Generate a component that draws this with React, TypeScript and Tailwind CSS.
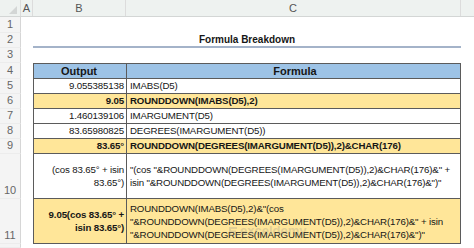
import React from 'react';

type Variant = 'plain' | 'yellow' | 'header';

interface RowProps {
  num?: string;
  h: string;
  variant?: Variant;
  b?: React.ReactNode;
  c?: React.ReactNode;
  bold?: boolean;
  boldC?: boolean;
  top?: boolean;
}

const cellBg = (v: Variant) =>
  v === 'yellow' ? 'bg-[#ffe699]' : v === 'header' ? 'bg-[#9dc3e6]' : 'bg-white';

const RowNum: React.FC<{ num?: string }> = ({ num }) => (
  <div className="w-[21px] shrink-0 flex items-end justify-center pb-px bg-[#f4f4f4] border-r border-r-[#d6d6d6] border-b border-b-[#ececec] text-[11px] leading-[13px] text-[#666] tracking-normal">
    {num}
  </div>
);

const TableRow: React.FC<RowProps> = ({ num, h, variant = 'plain', b, c, bold, boldC, top }) => (
  <div className={`flex ${h}`}>
    <RowNum num={num} />
    <div className="w-[12px] shrink-0" />
    <div
      className={`w-[93px] shrink-0 flex items-center justify-end pr-[2px] text-right whitespace-nowrap border-l border-b border-[#5b5b5b] ${cellBg(variant)} ${top ? 'border-t' : ''} ${bold ? 'font-bold' : ''}`}
    >
      {b}
    </div>
    <div
      className={`w-[335px] shrink-0 flex items-center pl-[3px] whitespace-nowrap overflow-hidden border-l border-r border-b border-[#5b5b5b] ${cellBg(variant)} ${top ? 'border-t' : ''} ${boldC ? 'font-bold' : ''}`}
    >
      {c}
    </div>
    <div className="flex-1 bg-white" />
  </div>
);

const ColHead: React.FC<{ label: string; w: string }> = ({ label, w }) => (
  <div className={`${w} shrink-0 flex items-center justify-center border-r border-[#dcdcdc] text-[11px] text-[#555] tracking-normal`}>
    {label}
  </div>
);

export default function App() {
  return (
    <div className="relative w-[474px] h-[248px] overflow-hidden bg-white font-['Liberation_Sans',Arial,sans-serif] text-[9.7px] tracking-[-0.15px] text-[#161616]">
      {/* column letters */}
      <div className="flex h-[17px] bg-[#eef2f0] border-b border-[#d3d6d5]">
        <div className="w-[21px] shrink-0 relative border-r border-[#dcdcdc]">
          <div className="absolute right-[3px] bottom-[2px] w-0 h-0 border-l-[8px] border-l-transparent border-b-[8px] border-b-[#d3d6d5]" />
        </div>
        <ColHead label="A" w="w-[12px]" />
        <ColHead label="B" w="w-[93px]" />
        <ColHead label="C" w="w-[335px]" />
        <div className="flex-1" />
      </div>

      <div className="flex h-[16px]">
        <RowNum num="1" />
        <div className="flex-1" />
      </div>

      {/* title */}
      <div className="flex h-[15px]">
        <RowNum num="2" />
        <div className="w-[12px] shrink-0" />
        <div className="w-[428px] shrink-0 flex items-center justify-center border-b-2 border-[#a4b3c9] font-bold text-[10px] tracking-normal">
          Formula Breakdown
        </div>
        <div className="flex-1" />
      </div>

      <div className="flex h-[15px]">
        <RowNum num="3" />
        <div className="flex-1" />
      </div>

      <TableRow
        num="4"
        h="h-[16px]"
        variant="header"
        top
        b={<span className="w-full text-center text-[11px] tracking-normal">Output</span>}
        c={<span className="w-full text-center text-[11px] tracking-normal">Formula</span>}
        bold
        boldC
      />
      <TableRow num="5" h="h-[15px]" b="9.055385138" c="IMABS(D5)" />
      <TableRow num="6" h="h-[15px]" variant="yellow" bold boldC b="9.05" c="ROUNDDOWN(IMABS(D5),2)" />
      <TableRow num="7" h="h-[15px]" b="1.460139106" c="IMARGUMENT(D5)" />
      <TableRow num="8" h="h-[15px]" b="83.65980825" c="DEGREES(IMARGUMENT(D5))" />
      <TableRow
        num="9"
        h="h-[15px]"
        variant="yellow"
        bold
        boldC
        b="83.65°"
        c="ROUNDDOWN(DEGREES(IMARGUMENT(D5)),2)&CHAR(176)"
      />
      <TableRow
        num="10"
        h="h-[45px]"
        b={
          <div className="leading-[13px]">
            (cos 83.65° + isin
            <br />
            83.65°)
          </div>
        }
        c={
          <div className="leading-[13px]">
            "(cos "&ROUNDDOWN(DEGREES(IMARGUMENT(D5)),2)&CHAR(176)&" +
            <br />
            isin "&ROUNDDOWN(DEGREES(IMARGUMENT(D5)),2)&CHAR(176)&")"
          </div>
        }
      />
      <TableRow
        num="11"
        h="h-[45px]"
        variant="yellow"
        bold
        b={
          <div className="leading-[13px]">
            9.05(cos 83.65° +
            <br />
            isin 83.65°)
          </div>
        }
        c={
          <div className="leading-[13px]">
            ROUNDDOWN(IMABS(D5),2)&"(cos
            <br />
            "&ROUNDDOWN(DEGREES(IMARGUMENT(D5)),2)&CHAR(176)&" + isin
            <br />
            "&ROUNDDOWN(DEGREES(IMARGUMENT(D5)),2)&CHAR(176)&")"
          </div>
        }
      />
      <div className="flex h-[4px]">
        <RowNum />
        <div className="flex-1" />
      </div>

      {/* watermark */}
      <div className="absolute left-[228px] top-[221px] flex items-center gap-[2px] opacity-25 text-[#8a8a8a] pointer-events-none">
        <svg width="10" height="10" viewBox="0 0 10 10">
          <path d="M1 1h8v2H3v1.5h5v2H3V8h6v1.5H1z" fill="#8a8a8a" />
        </svg>
        <span className="text-[13px] font-bold tracking-normal">exceldemy</span>
      </div>
    </div>
  );
}
